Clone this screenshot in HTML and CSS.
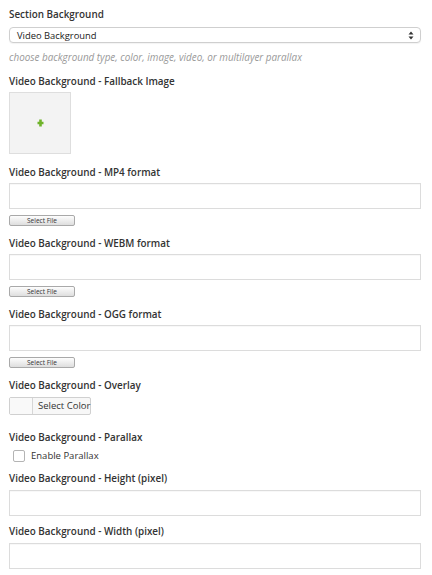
FILE: index.html
```html
<!DOCTYPE html>
<html>
<head>
<meta charset="utf-8">
<link rel="stylesheet" href="styles.css">
</head>
<body>
<div class="panel">
  <div class="field f-section">
    <div class="label">Section Background</div>
    <div class="select"><span>Video Background</span>
      <svg class="arrows" width="6" height="9" viewBox="0 0 6 9"><path d="M3 0.5 L5.5 3.5 H0.5 Z M3 8.5 L5.5 5.5 H0.5 Z" fill="#333"/></svg>
    </div>
    <div class="help">choose background type, color, image, video, or multilayer parallax</div>
  </div>

  <div class="field f-image">
    <div class="label">Video Background - Fallback Image</div>
    <div class="imgbox">
      <svg width="7" height="8" viewBox="0 0 7 8"><path d="M2.2 0.5 H4.8 V2.7 H6.5 V5.3 H4.8 V7.5 H2.2 V5.3 H0.5 V2.7 H2.2 Z" fill="#6fb32a"/></svg>
    </div>
  </div>

  <div class="field f-file">
    <div class="label">Video Background - MP4 format</div>
    <div class="input"></div>
    <div class="btn">Select File</div>
  </div>

  <div class="field f-file">
    <div class="label">Video Background - WEBM format</div>
    <div class="input"></div>
    <div class="btn">Select File</div>
  </div>

  <div class="field f-file">
    <div class="label">Video Background - OGG format</div>
    <div class="input"></div>
    <div class="btn">Select File</div>
  </div>

  <div class="field f-color">
    <div class="label">Video Background - Overlay</div>
    <div class="colorpick"><span class="swatch"></span><span class="ctext">Select Color</span></div>
  </div>

  <div class="field f-check">
    <div class="label">Video Background - Parallax</div>
    <div class="check"><span class="box"></span><span>Enable Parallax</span></div>
  </div>

  <div class="field f-text">
    <div class="label">Video Background - Height (pixel)</div>
    <div class="input"></div>
  </div>

  <div class="field f-text">
    <div class="label">Video Background - Width (pixel)</div>
    <div class="input"></div>
  </div>
</div>
</body>
</html>
```
FILE: styles.css
```css
* { box-sizing: border-box; }
html, body { margin: 0; padding: 0; background: #fff; }
body { font-family: "Open Sans", "DejaVu Sans", sans-serif; color: #333; }
.panel { width: 432px; padding: 7px 11px 0 9px; }
.label { font-size: 9.9px; font-weight: 600; line-height: 15px; color: #333; white-space: nowrap; }
.field { display: flex; flex-direction: column; align-items: flex-start; }
.f-section { margin-bottom: 10px; }
.f-image { margin-bottom: 11px; }
.f-file { margin-bottom: 10px; }
.f-color { margin-bottom: 15px; }
.f-check { margin-bottom: 9px; }
.f-text { margin-bottom: 8px; }

.select {
  margin-top: 5px; width: 412px; height: 16px; border: 1px solid #cfcfcf; border-radius: 4px;
  display: flex; align-items: center; justify-content: space-between; padding: 0 6px 0 7px;
  font-size: 9.4px; color: #222; background: #fff; box-shadow: 0 1px 1px rgba(0,0,0,0.05);
}
.arrows { display: block; }
.help { margin-top: 7px; font-size: 9.9px; font-style: italic; color: #999; line-height: 14px; white-space: nowrap; }

.imgbox {
  margin-top: 3px; width: 62px; height: 62px; background: #f3f3f3; border: 1px solid #dedede;
  display: flex; align-items: center; justify-content: center;
}
.imgbox svg { display: block; }

.input {
  margin-top: 3px; width: 412px; height: 26px; border: 1px solid #dcdcdc; background: #fff;
  box-shadow: inset 0 1px 1px rgba(0,0,0,0.03);
}
.f-text .input { margin-top: 4px; }
.btn {
  margin-top: 6px; width: 66px; height: 11px; border: 1px solid #a9a9a9; border-radius: 2px;
  background: linear-gradient(#fdfdfd, #dedede); font-size: 6.5px; line-height: 9px; text-align: center; color: #333;
}
.colorpick {
  margin-top: 4px; width: 82px; height: 18px; border: 1px solid #d0d0d0; border-radius: 2px;
  display: flex; background: #f7f7f7; white-space: nowrap;
}
.swatch { width: 23px; flex: none; border-right: 1px solid #d6d6d6; background: #f9f9f9; }
.ctext { font-size: 9.5px; line-height: 16px; padding-left: 5px; color: #333; }
.check { margin-top: 5px; display: flex; align-items: center; font-size: 9.5px; color: #333; line-height: 12px; padding-left: 4px; white-space: nowrap; }
.check .box { width: 12px; height: 12px; flex: none; border: 1px solid #b4b4b4; border-radius: 2px; background: #fff; margin-right: 6px; }
```
